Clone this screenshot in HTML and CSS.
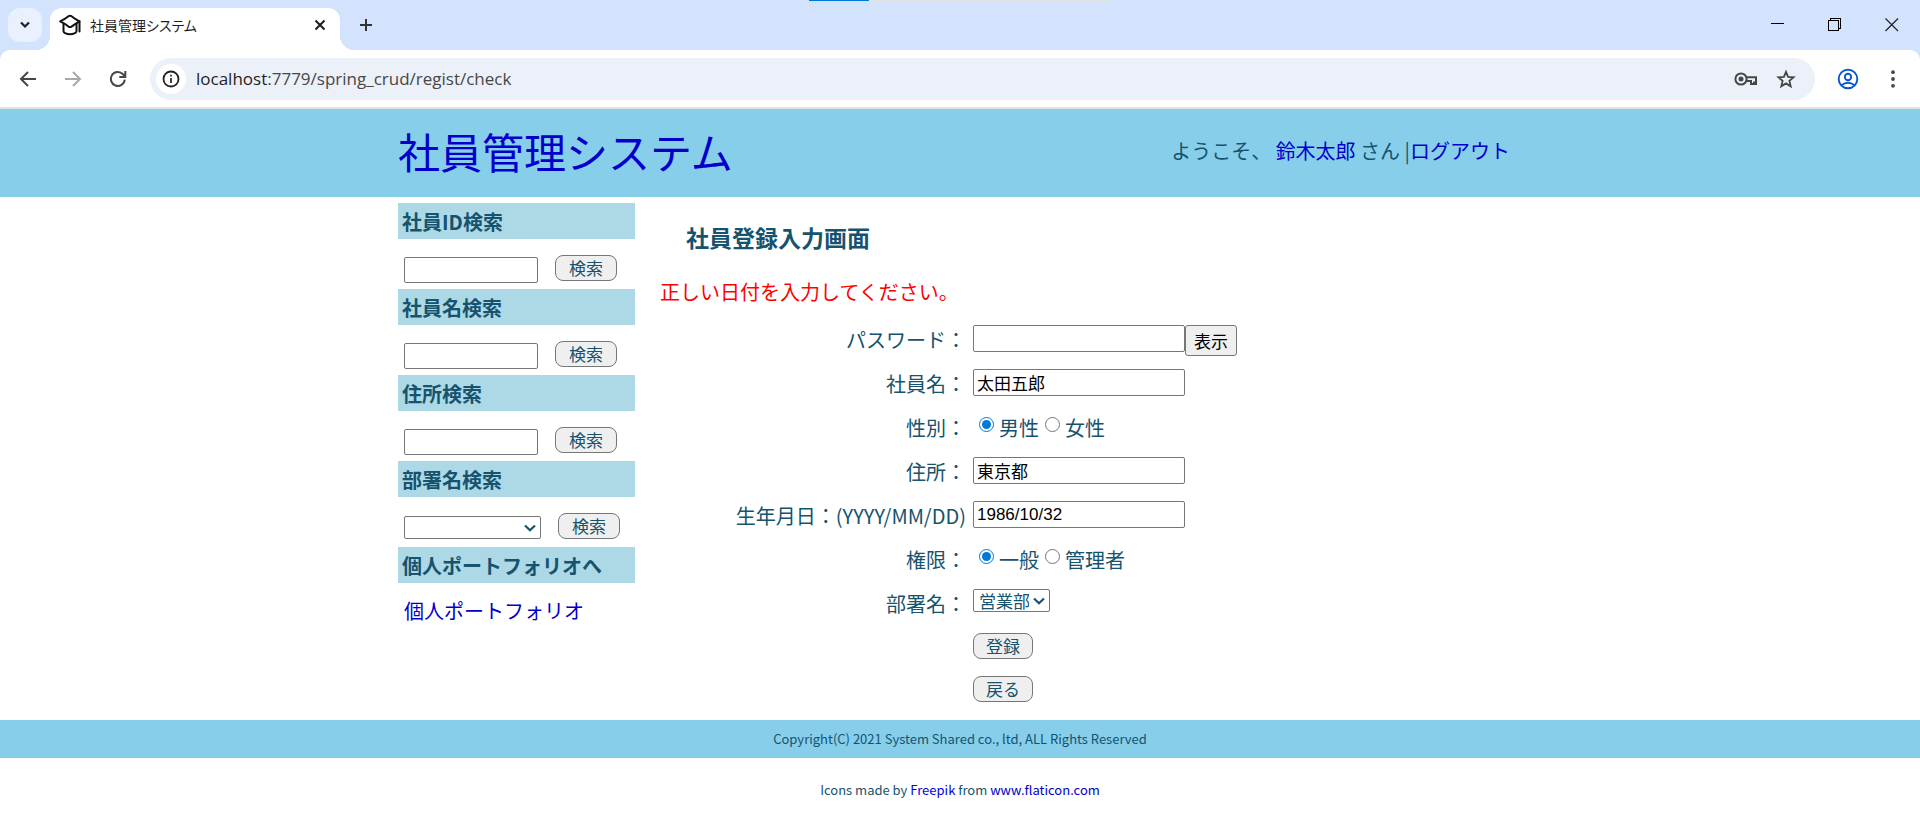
FILE: index.html
```html
<!DOCTYPE html>
<html lang="ja">
<head>
<meta charset="utf-8">
<title>社員管理システム</title>
<link rel="stylesheet" href="styles.css">
</head>
<body>
<div class="browser">
  <div class="tabstrip">
    <span class="load-bar"></span>
    <button class="tab-search" aria-label="タブを検索"><svg width="12" height="8" viewBox="0 0 12 8"><path d="M2 1.5 6 5.5 10 1.5" fill="none" stroke="#1f1f1f" stroke-width="2.2"/></svg></button>
    <div class="tab">
      <svg class="tab-icon" width="22" height="22" viewBox="0 0 22 22" fill="none" stroke="#111" stroke-width="2" stroke-linejoin="round" stroke-linecap="round"><path d="M1.2 7.3 Q6 5 9.5 2.2 Q11 1.4 12.500 2.200 Q16 5 20.500 7.300 Q16 10 12.500 12.600 Q11 13.500 9.500 12.600 Q6 9.500 1.200 7.300Z"/><path d="M4.500 10v7q0 1.500 1.500 2.200q5 2.300 10 0q1.500-.7 1.500-2.200v-7M20.500 7.500v10"/></svg>
      <span class="tab-title">社員管理システム</span>
      <button class="icon-btn tab-close" aria-label="タブを閉じる"><svg width="12" height="12" viewBox="0 0 12 12"><path d="M1.500 1.500l9 9M10.500 1.500l-9 9" stroke="#1f1f1f" stroke-width="2"/></svg></button>
    </div>
    <button class="icon-btn new-tab" aria-label="新しいタブ"><svg width="14" height="14" viewBox="0 0 14 14"><path d="M7 1v12M1 7h12" stroke="#333" stroke-width="2"/></svg></button>
    <div class="window-controls">
      <button class="icon-btn" aria-label="最小化"><svg width="14" height="14" viewBox="0 0 14 14" shape-rendering="crispEdges"><path d="M0 5.500h13" stroke="#000"/></svg></button>
      <button class="icon-btn" aria-label="元に戻す"><svg width="14" height="14" viewBox="0 0 14 14" fill="none" stroke="#000" shape-rendering="crispEdges"><path d="M.5 2.500h10v10H.5zM2.500 2.500v-2h10v10h-2"/></svg></button>
      <button class="icon-btn" aria-label="閉じる"><svg width="14" height="14" viewBox="0 0 14 14"><path d="M.5.5l12.500 12.500M13 .5.500 13" stroke="#222" stroke-width="1.200"/></svg></button>
    </div>
  </div>
  <div class="toolbar">
    <button class="icon-btn nav-btn" aria-label="戻る"><svg width="18" height="18" viewBox="0 0 18 18" fill="none" stroke="#474747" stroke-width="2"><path d="M17 9H3M9 2 2 9l7 7"/></svg></button>
    <button class="icon-btn nav-btn" aria-label="進む"><svg width="18" height="18" viewBox="0 0 18 18" fill="none" stroke="#a9a9a9" stroke-width="2"><path d="M1 9h14M9 2l7 7-7 7"/></svg></button>
    <button class="icon-btn nav-btn" aria-label="再読み込み"><svg width="18" height="18" viewBox="0 0 18 18" fill="none" stroke="#474747" stroke-width="2"><path d="M15.800 9.700A7 7 0 1 1 14 4.200L16 6.300M16.300 1v6h-6"/></svg></button>
    <div class="omnibox">
      <span class="site-info"><svg width="18" height="18" viewBox="0 0 18 18"><circle cx="9" cy="9" r="7.500" fill="none" stroke="#222" stroke-width="1.800"/><path d="M9 8v5M9 4.800v1.800" stroke="#222" stroke-width="1.700"/></svg></span>
      <span class="url">localhost<span class="url-path">:7779/spring_crud/regist/check</span></span>
      <button class="icon-btn" aria-label="パスワード"><svg width="24" height="16" viewBox="0 0 24 16" fill="none" stroke="#474747" stroke-width="2"><circle cx="7" cy="8" r="5.600"/><circle cx="7" cy="8" r="2.500" fill="#474747" stroke="none"/><path d="M12 6.300h10v6.700h-5v-3h-4.500M20 10.500V13"/></svg></button>
      <button class="icon-btn" aria-label="ブックマーク"><svg width="20" height="20" viewBox="0 0 20 20"><path d="M10 2.800l2.100 5.100 5.500.4-4.200 3.600 1.300 5.400-4.700-2.900-4.700 2.900 1.300-5.400-4.200-3.600 5.500-.4z" fill="none" stroke="#474747" stroke-width="1.800"/></svg></button>
    </div>
    <button class="icon-btn profile" aria-label="プロフィール"><svg width="22" height="22" viewBox="0 0 22 22" fill="none" stroke="#0b57d0" stroke-width="1.900"><circle cx="11" cy="11" r="9.300"/><circle cx="11" cy="9" r="3.200"/><path d="M4.500 17.200q6.500-5 13 0"/></svg></button>
    <button class="icon-btn" aria-label="メニュー"><svg width="6" height="20" viewBox="0 0 6 20" fill="#474747"><circle cx="3" cy="3.200" r="1.900"/><circle cx="3" cy="10" r="1.900"/><circle cx="3" cy="16.800" r="1.900"/></svg></button>
  </div>
</div>

<header class="site-header">
  <div class="container header-inner">
    <h1 class="site-title"><a href="#">社員管理システム</a></h1>
    <p class="welcome">ようこそ、 <a href="#">鈴木太郎</a> さん |<a href="#">ログアウト</a></p>
  </div>
</header>

<div class="container layout">
  <aside class="sidebar">
    <h2 class="side-title"><label for="q-id">社員ID検索</label></h2>
    <form class="search"><input id="q-id" class="box" type="text"><button class="btn" type="button">検索</button></form>
    <h2 class="side-title"><label for="q-name">社員名検索</label></h2>
    <form class="search"><input id="q-name" class="box" type="text"><button class="btn" type="button">検索</button></form>
    <h2 class="side-title"><label for="q-addr">住所検索</label></h2>
    <form class="search"><input id="q-addr" class="box" type="text"><button class="btn" type="button">検索</button></form>
    <h2 class="side-title"><label for="q-dept">部署名検索</label></h2>
    <form class="search"><select id="q-dept" class="dept"><option></option><option>営業部</option></select><button class="btn" type="button">検索</button></form>
    <h2 class="side-title">個人ポートフォリオへ</h2>
    <p class="portfolio"><a href="#">個人ポートフォリオ</a></p>
  </aside>
  <main class="main">
    <h2 class="page-title">社員登録入力画面</h2>
    <p class="error">正しい日付を入力してください。</p>
    <form class="regist">
      <label class="label" for="pw">パスワード：</label>
      <div class="field"><input id="pw" class="box" type="password"><button class="show-btn" type="button">表示</button></div>
      <label class="label" for="name">社員名：</label>
      <div class="field"><input id="name" class="box" type="text" value="太田五郎"></div>
      <span class="label">性別：</span>
      <div class="field">
        <label class="choice"><input type="radio" name="sex" checked>男性</label>
        <label class="choice"><input type="radio" name="sex">女性</label>
      </div>
      <label class="label" for="addr">住所：</label>
      <div class="field"><input id="addr" class="box" type="text" value="東京都"></div>
      <label class="label" for="birth">生年月日：(YYYY/MM/DD)</label>
      <div class="field"><input id="birth" class="box" type="text" value="1986/10/32"></div>
      <span class="label">権限：</span>
      <div class="field">
        <label class="choice"><input type="radio" name="auth" checked>一般</label>
        <label class="choice"><input type="radio" name="auth">管理者</label>
      </div>
      <label class="label" for="dept">部署名：</label>
      <div class="field"><select id="dept" class="dept"><option>営業部</option></select></div>
      <div class="actions">
        <button class="btn" type="button">登録</button>
        <button class="btn" type="button">戻る</button>
      </div>
    </form>
  </main>
</div>

<footer class="copyright">Copyright(C) 2021 System Shared co., ltd, ALL Rights Reserved</footer>
<p class="credit">Icons made by <a class="freepik" href="#">Freepik</a> from <a href="#">www.flaticon.com</a></p>
</body>
</html>
```
FILE: styles.css
```css
* {
  box-sizing: border-box;
}

body {
  margin: 0;
  background: #fff;
  color: #15536e;
  font: 20px/30px "Noto Sans CJK JP", sans-serif;
}

h1, h2, p {
  margin: 0;
}

a {
  color: #0000cd;
  text-decoration: none;
}

button, input, select {
  margin: 0;
  font-size: 17px;
}

svg {
  display: block;
}

/* browser frame */
.browser {
  background: #d3e3fd;
  border-bottom: 2px solid #dfe1e2;
}

.tabstrip {
  position: relative;
  display: flex;
  height: 50px;
  padding: 8px 21px 0 8px;
}

.load-bar {
  position: absolute;
  top: 0;
  left: 50%;
  width: 301px;
  height: 1px;
  margin-left: -151px;
  background: linear-gradient(to right, #0078d7 60px, #e1e1e1 60px);
}

.icon-btn {
  display: flex;
  align-items: center;
  justify-content: center;
  padding: 0;
  border: 0;
  background: none;
}

.tab-search {
  display: flex;
  align-items: center;
  justify-content: center;
  width: 34px;
  height: 34px;
  padding: 0;
  border: 0;
  border-radius: 12px;
  background: #e9f0fe;
}

.tab {
  position: relative;
  display: flex;
  align-items: center;
  width: 290px;
  height: 42px;
  margin-left: 8px;
  padding: 0 14px 8px 9px;
  border-radius: 12px 12px 0 0;
  background: #fff;
}

.tab::before,
.tab::after {
  content: "";
  position: absolute;
  bottom: 0;
  width: 14px;
  height: 14px;
}

.tab::before {
  right: 100%;
  background: radial-gradient(circle at 0 0, transparent 14px, #fff 14px);
}

.tab::after {
  left: 100%;
  background: radial-gradient(circle at 100% 0, transparent 14px, #fff 14px);
}

.tab-title {
  flex: 1;
  margin-left: 9px;
  color: #1f1f1f;
  font-size: 14px;
  font-feature-settings: "palt";
}

.new-tab {
  width: 34px;
  height: 34px;
  margin-left: 9px;
}

.window-controls {
  display: flex;
  gap: 43px;
  height: 34px;
  margin-left: auto;
}

.toolbar {
  display: flex;
  align-items: center;
  height: 57px;
  padding: 0 24px 0 13px;
  border-radius: 10px 10px 0 0;
  background: #fff;
}

.nav-btn {
  width: 30px;
  height: 30px;
  margin-right: 15px;
}

.omnibox {
  display: flex;
  flex: 1;
  align-items: center;
  gap: 18px;
  height: 42px;
  margin: 0 22px 0 2px;
  padding: 0 19px 0 6px;
  border-radius: 21px;
  background: #ecf0f9;
}

.site-info {
  display: flex;
  align-items: center;
  justify-content: center;
  width: 30px;
  height: 30px;
  border-radius: 50%;
  background: #fff;
}

.url {
  flex: 1;
  margin-left: -8px;
  color: #1f1f1f;
  font-family: "Open Sans", sans-serif;
  font-size: 17px;
}

.url-path {
  color: #474747;
}

.profile {
  margin-right: 31px;
}

/* page */
.container {
  width: 100%;
  max-width: 1124px;
  margin: 0 auto;
}

.site-header {
  background: #87ceeb;
}

.header-inner {
  display: flex;
  align-items: center;
  justify-content: space-between;
  height: 88px;
  padding: 0 12px 4px 0;
}

.site-title {
  font-size: 42px;
  font-weight: 400;
  line-height: 60px;
}

.layout {
  display: flex;
  gap: 25px;
  padding: 6px 0 18px;
}

.sidebar {
  flex: 0 0 237px;
}

.side-title {
  height: 36px;
  padding: 4px 4px 2px;
  background: #add8e6;
  font-size: 20px;
  font-weight: 700;
}

.search {
  display: flex;
  align-items: flex-start;
  gap: 17px;
  height: 50px;
  padding: 16px 6px 0;
}

.box {
  border: 1px solid #767676;
  border-radius: 2px;
  background: #fff;
  color: #000;
  font-family: "Liberation Sans", "Noto Sans CJK JP", sans-serif;
}

.search .box {
  width: 134px;
  height: 26px;
  margin-top: 2px;
}

.dept {
  width: 77px;
  height: 23px;
  padding: 0 20px 0 5px;
  border: 1px solid #767676;
  border-radius: 2px;
  appearance: none;
  background: #fff url("data:image/svg+xml,%3Csvg xmlns='http://www.w3.org/2000/svg' width='12' height='8' viewBox='0 0 12 8'%3E%3Cpath d='M1 1.5 6 6.300 11 1.5' fill='none' stroke='%2315536e' stroke-width='2.200'/%3E%3C/svg%3E") no-repeat right 4px center;
  color: #15536e;
  font-family: "Noto Sans CJK JP", sans-serif;
  line-height: 20px;
}

.search .dept {
  width: 137px;
  margin-top: 3px;
}

.btn {
  height: 26px;
  padding: 0 13px;
  border: 1px solid #767676;
  border-radius: 8px;
  background: #efefef;
  color: #15536e;
  font-family: "Noto Sans CJK JP", sans-serif;
  line-height: 24px;
}

.search .btn {
  width: 62px;
}

.portfolio {
  padding: 13px 6px;
}

.main {
  flex: 1;
}

.page-title {
  padding: 19px 26px 20px;
  font-size: 23px;
  font-weight: 700;
}

.error {
  padding: 5px 0 18px;
  color: #f00;
}

.regist {
  display: grid;
  grid-template-columns: 306px 1fr;
  grid-auto-rows: minmax(44px, auto);
  column-gap: 7px;
}

.label {
  text-align: right;
}

.field {
  display: flex;
  align-items: flex-start;
}

.field .box {
  width: 212px;
  height: 27px;
  padding: 1px 3px;
}

.show-btn {
  width: 52px;
  height: 31px;
  padding: 0;
  border: 1px solid #767676;
  border-radius: 3px;
  background: #efefef;
  color: #000;
  font-family: "Noto Sans CJK JP", sans-serif;
}

.choice {
  display: flex;
  align-items: flex-start;
}

.choice input {
  width: 15px;
  height: 15px;
  margin: 4px 5px 0 6px;
  accent-color: #0078d7;
}

.actions {
  display: flex;
  flex-direction: column;
  grid-column: 2;
  align-items: flex-start;
  gap: 17px;
}

.actions .btn {
  width: 60px;
  padding: 0;
}

.copyright {
  padding: 4px 0;
  background: #87ceeb;
  font-size: 13px;
  text-align: center;
}

.credit {
  padding: 17px 0;
  font-size: 13px;
  text-align: center;
}

.freepik {
  color: #00e;
}
```
